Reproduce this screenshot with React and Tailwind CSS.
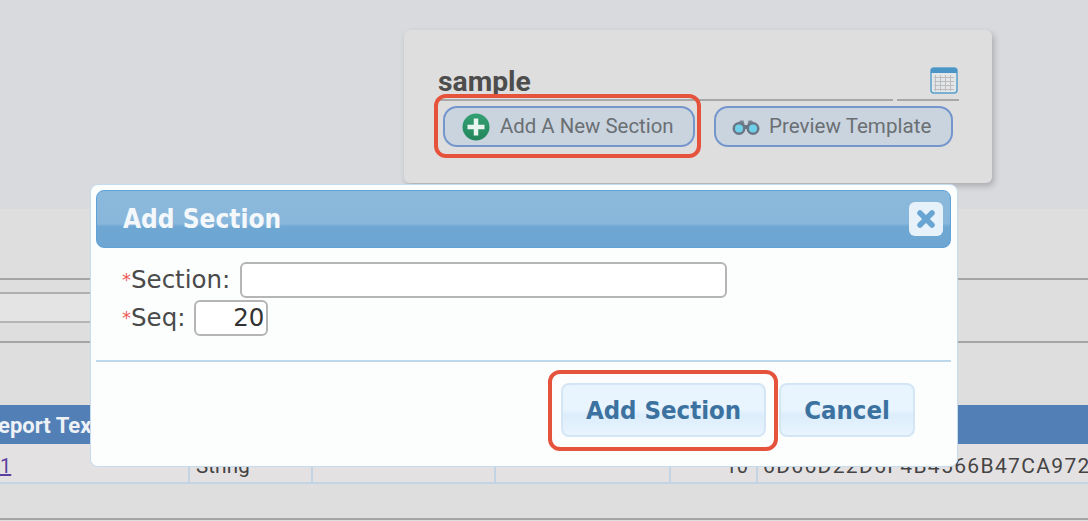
const roboto = { fontFamily: "Roboto, sans-serif" };
const condensed = { fontFamily: '"DejaVu Sans Condensed", "DejaVu Sans", sans-serif' };

function Calendar() {
  return (
    <svg width="28" height="27" viewBox="0 0 28 27" className="block">
      <rect x="1" y="1" width="26" height="25" rx="3" fill="#e2e6e8" stroke="#58a0cb" strokeWidth="1.5" />
      <path d="M1 4a3 3 0 0 1 3-3h20a3 3 0 0 1 3 3v2H1z" fill="#4a95c5" />
      <g stroke="#bdbdbd" strokeWidth="1">
        <path d="M4 10.500h20M4 14.500h20M4 18.500h20M4 22.500h20M5.500 8v16M10.500 8v16M15.500 8v16M20.500 8v16" />
      </g>
    </svg>
  );
}

function Plus() {
  return (
    <svg width="28" height="28" viewBox="0 0 28 28" className="block">
      <defs>
        <linearGradient id="plusFill" x1="0" y1="0" x2="0" y2="1">
          <stop offset="0" stopColor="#33a072" />
          <stop offset="1" stopColor="#24855c" />
        </linearGradient>
      </defs>
      <circle cx="14" cy="14" r="13.500" fill="url(#plusFill)" />
      <path d="M14 5.500v17M5.500 14h17" stroke="#eaf5ef" strokeWidth="4.500" />
    </svg>
  );
}

function Binoculars() {
  return (
    <svg width="28" height="17" viewBox="0 0 28 17" className="block">
      <path d="M4 9 8 2.500h3.500L13 8M24 9l-4-6.500h-3.500L15 8" fill="#7a8694" />
      <rect x="11" y="7" width="6" height="4" fill="#6b7684" />
      <circle cx="7" cy="10.500" r="6.500" fill="#6b7684" />
      <circle cx="21" cy="10.500" r="6.500" fill="#6b7684" />
      <circle cx="7" cy="10.500" r="4" fill="#6fd0ea" />
      <circle cx="21" cy="10.500" r="4" fill="#6fd0ea" />
    </svg>
  );
}

function CloseGlyph() {
  return (
    <svg width="20" height="20" viewBox="0 0 20 20" className="block">
      <path d="M4 4l12 12M16 4L4 16" stroke="#69a5d3" strokeWidth="5.500" strokeLinecap="round" />
    </svg>
  );
}

export default function App() {
  return (
    <div className="relative w-[1088px] h-[521px] overflow-hidden bg-[#dedede]" style={roboto}>
      {/* Top band with card */}
      <div className="h-[209px] bg-[#d9dade] pt-[30px] pl-[404px]">
        <div className="w-[588px] h-[153px] rounded-md bg-[#dedede] shadow-[2px_3px_6px_rgba(0,0,0,0.22)] pl-[33px] pr-[33px] pt-[36px]">
          <div className="flex h-[35px] items-end gap-[4px]">
            <div className="w-[456px] h-[35px] border-b-2 border-[#a8a8a8] text-[28.300px] leading-[32px] font-bold text-[#4d4d4d] pl-[1px]">sample</div>
            <div className="w-[62px] h-[35px] border-b-2 border-[#a8a8a8] flex justify-end items-start pt-[1px] pr-[1px]">
              <Calendar />
            </div>
          </div>
          <div className="flex gap-[19px] mt-[5px] ml-[6px]">
            <div className="w-[252px] h-[41px] rounded-[14px] border-2 border-[#7496cc] bg-[#c9d4df] flex items-center pl-[17px] gap-[10px] text-[20.400px] text-[#6b6f73]">
              <Plus />
              <span>Add A New Section</span>
            </div>
            <div className="w-[239px] h-[41px] rounded-[14px] border-2 border-[#7496cc] bg-[#c9d4df] flex items-center pl-[16px] gap-[9px] text-[20.600px] text-[#6b6f73]">
              <Binoculars />
              <span>Preview Template</span>
            </div>
          </div>
        </div>
      </div>

      {/* Background rules */}
      <div className="h-[71px] border-b-2 border-[#a5a5a5]" />
      <div className="h-[14px] w-[90px] border-b-2 border-[#b0b0b0]" />
      <div className="h-[29px] w-[90px] bg-[#e4e4e4] border-b-2 border-[#b5b5b5]" />
      <div className="h-[20px] border-b-2 border-[#a5a5a5]" />

      {/* Table */}
      <div className="mt-[62px] h-[39px] bg-[#527fb5] overflow-hidden text-[22px] font-bold leading-[42px] text-[#eef2f6] whitespace-nowrap">
        <span className="-ml-[16px] inline-block">Report Text</span>
      </div>
      <div className="h-[40px] bg-[#e4e1e2] border-b-2 border-[#c3d4e4] grid grid-cols-[190px_123px_183px_175px_87px_1fr] text-[20px] leading-[44px] text-[#444444] whitespace-nowrap overflow-hidden">
        <div className="border-r-2 border-[#c3d4e4]"><span className="text-[#5a3fa0] underline">1</span></div>
        <div className="border-r-2 border-[#c3d4e4] pl-[6px] text-[20.500px]">String</div>
        <div className="border-r-2 border-[#c3d4e4]" />
        <div className="border-r-2 border-[#c3d4e4]" />
        <div className="border-r-2 border-[#c3d4e4] text-right pr-[8px]">10</div>
        <div className="pl-[5px] text-[21px] tracking-[1.350px]">6D66D22D6F4B4566B47CA972</div>
      </div>
      <div className="mt-[34px] h-[2px] bg-[#a5a5a5]" />

      {/* Dialog */}
      <div className="absolute left-[90px] top-[184px] w-[868px] h-[283px] rounded-lg bg-[#fcfefe] border border-[#c5dcef] pt-[5px] pl-[5px] pr-[6px]" style={{ fontFamily: '"DejaVu Sans", sans-serif' }}>
        <div className="relative h-[58px] rounded-lg border border-[#5fa2d8] bg-[linear-gradient(#8ab9dc_0%,#88b7db_58%,#6fa7d3_64%,#6ea6d3_100%)] flex items-center pl-[26px] pr-[7px] justify-between">
          <span className="text-[26px] font-bold text-[#f4f8fb] leading-none" style={condensed}>Add Section</span>
          <div className="w-[34px] h-[34px] rounded-md bg-[#e6f1fa] flex items-center justify-center">
            <CloseGlyph />
          </div>
        </div>

        <div className="pl-[26px] pt-[14px] text-[24.500px] leading-none text-[#4a4a4a]">
          <div className="flex items-center h-[36px]">
            <span className="text-[#f05a5a] text-[18px]">*</span>
            <span>Section:</span>
            <div className="ml-[10px] w-[487px] h-[36px] rounded-md border-2 border-[#b5b5b5] bg-white" />
          </div>
          <div className="flex items-center h-[36px] mt-[2px]">
            <span className="text-[#f05a5a] text-[18px]">*</span>
            <span>Seq:</span>
            <div className="ml-[9px] w-[74px] h-[36px] rounded-md border-2 border-[#b5b5b5] bg-white text-right pr-[2px] leading-[32px] text-[#333333]">20</div>
          </div>
        </div>

        <div className="mt-[24px] h-[2px] bg-[#bcd8ea]" />

        <div className="relative flex justify-end gap-[13px] pr-[36px] pt-[21px]">
          <div className="relative w-[205px] h-[54px] rounded-lg border-2 border-[#d4e6f5] bg-[linear-gradient(#e8f4fe_0%,#e8f4fe_50%,#dcedfb_60%,#e8f4fe_100%)] flex items-center justify-center text-[25.500px] font-bold text-[#3c729f]" style={condensed}>
            Add Section
            <div className="absolute -left-[15px] -top-[15px] w-[230px] h-[81px] rounded-[12px] border-4 border-[#e6533c]" />
          </div>
          <div className="w-[136px] h-[54px] rounded-lg border-2 border-[#d4e6f5] bg-[linear-gradient(#e8f4fe_0%,#e8f4fe_50%,#dcedfb_60%,#e8f4fe_100%)] flex items-center justify-center text-[25.500px] font-bold text-[#3c729f]" style={condensed}>
            Cancel
          </div>
        </div>
      </div>

      {/* Annotation around the top button */}
      <div className="absolute left-[434px] top-[94px] w-[267px] h-[64px] rounded-[12px] border-4 border-[#e6533c]" />
    </div>
  );
}
